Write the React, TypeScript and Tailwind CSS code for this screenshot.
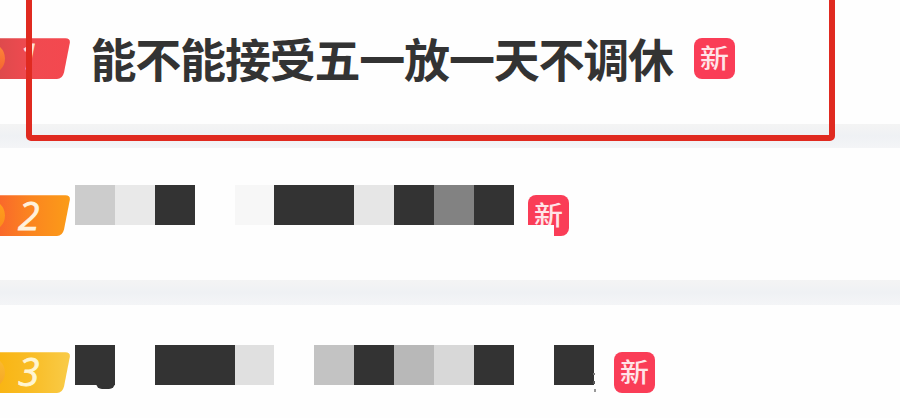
type Theme = { id: string; from: string; mid: string; to: string; coinA: string; coinB: string; ink: string };

const themes: Theme[] = [
  { id: "r1", from: "#dc4a4c", mid: "#f04a50", to: "#f4484f", coinA: "#ff8a3a", coinB: "#f4602f", ink: "#ffe0dc" },
  { id: "r2", from: "#f9652c", mid: "#fb8420", to: "#fb9c18", coinA: "#ffa21c", coinB: "#fb8a1c", ink: "#fff1dc" },
  { id: "r3", from: "#f9b412", mid: "#f9bc24", to: "#f9cb48", coinA: "#fbbc30", coinB: "#f5a525", ink: "#fff6d2" },
];

function RankTag({ rank }: { rank: number }) {
  const t = themes[rank - 1];
  return (
    <svg width="72" height="42" viewBox="0 0 72 42" className="block shrink-0 overflow-visible">
      <defs>
        <linearGradient id={t.id} x1="0" x2="1" y1="0" y2="0">
          <stop offset="0" stopColor={t.from} />
          <stop offset="0.45" stopColor={t.mid} />
          <stop offset="1" stopColor={t.to} />
        </linearGradient>
        <linearGradient id={t.id + "c"} x1="0" x2="0" y1="0" y2="1">
          <stop offset="0" stopColor={t.coinA} />
          <stop offset="1" stopColor={t.coinB} />
        </linearGradient>
      </defs>
      <path d="M-4 .2H65.500Q70.500 .2 69.800 5L64 34.500Q62.300 41 57 41H-4Z" fill={`url(#${t.id})`} />
      <circle cx="-11" cy="20.500" r="16" fill={`url(#${t.id}c)`} />
      <text
        x={rank === 1 ? 19 : 18}
        y={rank === 1 ? 31 : rank === 2 ? 35 : 33.5}
        fontSize={rank === 1 ? 35 : 39}
        fontStyle="italic"
        fontWeight="400"
        fontFamily="'Open Sans', 'Noto Sans', sans-serif"
        fill={t.ink}
        stroke={t.ink}
        strokeWidth=".8"
      >
        {rank}
      </text>
    </svg>
  );
}

function NewBadge({ cut = false }: { cut?: boolean }) {
  return (
    <div
      className={
        "flex h-[41px] w-[41px] shrink-0 items-center justify-center rounded-[8px] bg-[#fa3d57] font-['Noto_Sans_CJK_SC',sans-serif] text-[29px] leading-none font-medium text-[#ffe4e8] " +
        (cut ? "[clip-path:polygon(0_0,100%_0,100%_100%,26px_100%,26px_30px,0_30px)]" : "")
      }
    >
      <span className="-mt-[5px] block scale-y-90">新</span>
    </div>
  );
}

function Mosaic({ cells }: { cells: string[] }) {
  return (
    <div className="flex h-[40px] shrink-0">
      {cells.map((c, i) => (
        <div key={i} className={"h-full w-[39.9px] " + c} />
      ))}
    </div>
  );
}

function Divider() {
  return (
    <div className="shrink-0 bg-linear-to-b from-[#f4f4f4] via-[#eff1f4] to-[#f4f5f7]" />
  );
}

export default function App() {
  return (
    <div className="relative grid h-[418px] w-[900px] grid-rows-[124px_24px_132px_25px_113px] overflow-hidden bg-[#fefefe]">
      <div className="flex items-start pt-[38px]">
        <RankTag rank={1} />
        <h1 className="-mt-[2px] ml-[18.5px] h-[41px] w-[603.5px] shrink-0 font-['Noto_Sans_CJK_SC',sans-serif] text-[46px] leading-[43px] font-bold tracking-[-1.2px] whitespace-nowrap text-[#333333]">
          能不能接受五一放一天不调休
        </h1>
        <NewBadge />
      </div>
      <Divider />
      <div className="flex items-start pt-[37px]">
        <div className="pt-[10px]">
          <RankTag rank={2} />
        </div>
        <div className="ml-[3px] w-[453px] shrink-0">
          <Mosaic
            cells={[
              "bg-[#cccccc]", "bg-[#e9e9e9]", "bg-[#333333]", "", "bg-[#f7f7f7]", "bg-[#333333]",
              "bg-[#333333]", "bg-[#e6e6e6]", "bg-[#333333]", "bg-[#828282]", "bg-[#333333]",
            ]}
          />
        </div>
        <div className="pt-[10px]">
          <NewBadge cut />
        </div>
      </div>
      <Divider />
      <div className="flex items-start pt-[40px]">
        <div className="pt-[7px]">
          <RankTag rank={3} />
        </div>
        <div className="relative ml-[3px] w-[539px] shrink-0">
          <Mosaic
            cells={[
              "bg-[#333333]", "", "bg-[#333333]", "bg-[#333333]", "bg-[#e0e0e0]", "", "bg-[#c3c3c3]",
              "bg-[#333333]", "bg-[#b8b8b8]", "bg-[#d8d8d8]", "bg-[#333333]", "", "bg-[#333333]",
            ]}
          />
          <div className="absolute top-[38px] left-[21px] h-[6px] w-[19px] rounded-b-[7px] bg-[#333333]" />
          <div className="absolute top-[28px] left-[518px] h-[2px] w-[2px] bg-[#777777]" />
          <div className="absolute top-[36px] left-[518px] h-[3px] w-[2px] bg-[#555555]" />
          <div className="absolute top-[44px] left-[519px] h-[3px] w-[2px] bg-[#999999]" />
        </div>
        <div className="pt-[7px]">
          <NewBadge />
        </div>
      </div>
      <div className="absolute -top-[20px] left-[26px] h-[161px] w-[809px] rounded-[5px] border-[6px] border-[#e02a20]" />
    </div>
  );
}
